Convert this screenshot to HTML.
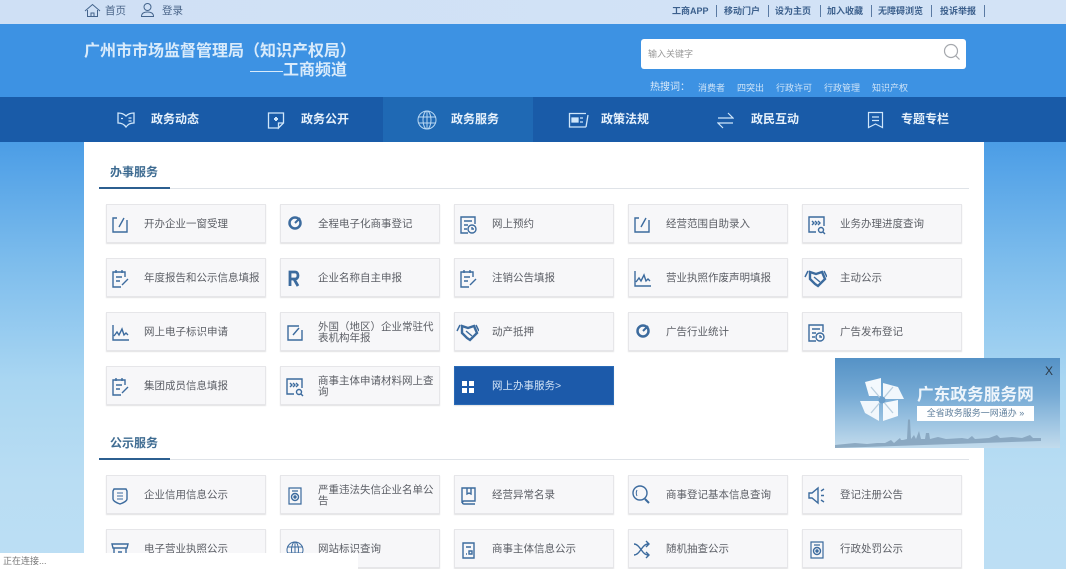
<!DOCTYPE html>
<html lang="zh-CN"><head><meta charset="utf-8"><title>工商频道</title>
<style>
*{box-sizing:border-box}
html,body{margin:0;padding:0}
body{width:1066px;height:569px;overflow:hidden;position:relative;font-family:"Liberation Sans","Noto Sans CJK SC",sans-serif;background:linear-gradient(180deg,#4b9de6 142px,#7cbcec 260px,#a9d6f2 380px,#b9ddf3 480px,#bcdef4 569px)}
#w{position:absolute;left:0;top:0;width:1066px;height:569px;filter:blur(.35px)}
.a{position:absolute;white-space:nowrap}
#top{left:0;top:0;width:1066px;height:24px;background:linear-gradient(90deg,#cfe0f5,#d3e3f6)}
.tl{top:5px;font-size:9px;line-height:13px;color:#3b5f8c;font-weight:bold}
.tn{top:4px;font-size:10.500px;line-height:14px;color:#4a6488}
.sp{top:5px;width:1px;height:12px;background:#5a7aa3}
#hd{left:0;top:24px;width:1066px;height:73px;background:#3d92e3}
#nav{left:0;top:97px;width:1066px;height:45px;background:#195ba8}
#act{left:383px;top:97px;width:150px;height:45px;background:#1f69b4}
.n{top:111px;font-size:12px;line-height:17px;font-weight:bold;color:#e6f1fb}
.hw{top:82px;font-size:9px;line-height:13px;color:#cfe4f8}
#panel{left:84px;top:142px;width:900px;height:427px;background:#fff}
.h{left:110px;font-size:12px;line-height:16px;color:#3f6c92;font-weight:bold}
.g{left:99px;width:870px;height:1px;background:#dfe3e8}
.u{left:99px;width:71px;height:2px;background:#2c5f90}
.c{position:absolute;width:160px;height:39px;background:#f7f7f9;border:1px solid #e6e6e9;box-shadow:0 1px 1px #e2e2e4;font-size:10.5px;color:#5c5f66}
.c svg{position:absolute;left:0;top:7px;width:24px;height:24px;fill:none;stroke:#3c6b9e;stroke-width:1.4}
.c span{position:absolute;left:37px;top:1px;width:121px;height:37px;display:flex;align-items:center;line-height:11px}
#blue{background:#1c5aaa;border-color:#2a6ab6;color:#d3e4f7}
#ad{left:835px;top:358px;width:225px;height:90px;background:linear-gradient(180deg,#5592c6 0,#74a9d4 40%,#a5c9e4 78%,#c2dbec 100%);overflow:hidden}
#st{left:0;top:553px;width:358px;height:16px;background:#fff;font-size:9px;line-height:16px;color:#777;padding-left:3px}
</style></head><body><div id="w">

<div class="a" id="top"></div>
<svg class="a" style="left:84px;top:3px" width="17" height="15" viewBox="0 0 17 15" fill="none" stroke="#44648c" stroke-width="1"><path d="M1 8 8.5 1.5 16 8M3.5 7v6.5h10V7M7 13.5V10h3v3.5"/></svg>
<div class="a tn" style="left:105px">首页</div>
<svg class="a" style="left:140px;top:2px" width="15" height="16" viewBox="0 0 15 16" fill="none" stroke="#44648c" stroke-width="1"><circle cx="7.5" cy="5" r="3.5"/><path d="M1.5 14.5c0-3 2-4.5 6-4.5s6 1.500 6 4.500z"/></svg>
<div class="a tn" style="left:162px">登录</div>
<div class="a tl" style="left:672px">工商APP</div><div class="a sp" style="left:716px"></div>
<div class="a tl" style="left:724px">移动门户</div><div class="a sp" style="left:768px"></div>
<div class="a tl" style="left:775px">设为主页</div><div class="a sp" style="left:820px"></div>
<div class="a tl" style="left:827px">加入收藏</div><div class="a sp" style="left:871px"></div>
<div class="a tl" style="left:878px">无障碍浏览</div><div class="a sp" style="left:931px"></div>
<div class="a tl" style="left:940px">投诉举报</div><div class="a sp" style="left:984px"></div>

<div class="a" id="hd"></div>
<div class="a" style="left:84px;top:42px;font-size:16px;line-height:20px;font-weight:bold;color:#d9ebfb">广州市市场监督管理局（知识产权局）</div>
<div class="a" style="left:250px;top:71px;width:33px;height:1px;background:#d9ebfb"></div>
<div class="a" style="left:283px;top:61px;font-size:16px;line-height:20px;font-weight:bold;color:#d9ebfb">工商频道</div>
<div class="a" style="left:641px;top:39px;width:325px;height:30px;background:#fff;border-radius:3px"></div>
<div class="a" style="left:648px;top:48px;font-size:9px;line-height:12px;color:#999">输入关键字</div>
<svg class="a" style="left:943px;top:43px" width="18" height="18" viewBox="0 0 18 18" fill="none" stroke="#a5a8ad" stroke-width="1.2"><circle cx="8" cy="8" r="6.500"/><path d="M12.800 12.800 16.500 16.500"/></svg>
<div class="a" style="left:650px;top:81px;font-size:10px;line-height:14px;color:#dcebfa">热搜词：</div>
<div class="a hw" style="left:698px">消费者</div>
<div class="a hw" style="left:737px">四突出</div>
<div class="a hw" style="left:776px">行政许可</div>
<div class="a hw" style="left:824px">行政管理</div>
<div class="a hw" style="left:872px">知识产权</div>

<div class="a" id="nav"></div><div class="a" id="act"></div>
<svg class="a" style="left:116px;top:111px" width="20" height="18" viewBox="0 0 20 18" fill="none" stroke="#cfe6fa" stroke-width="1.300"><path d="M2 2c3 0 6 1 8 3 2-2 5-3 8-3v10c-3 0-6 1-8 4-2-3-5-4-8-4z"/><path d="M12.500 7h3M12.500 10h3M5 7.500h2"/></svg>
<svg class="a" style="left:267px;top:111px" width="19" height="19" viewBox="0 0 19 19" fill="none" stroke="#cfe6fa" stroke-width="1.300"><path d="M11 17H1.500V2h15v10l-5 5v-5h5"/><path d="M7 8h4M9 6v4" stroke-width="2"/></svg>
<svg class="a" style="left:417px;top:110px" width="20" height="20" viewBox="0 0 20 20" fill="none" stroke="#b9d8f3" stroke-width="1"><circle cx="10" cy="10" r="9"/><ellipse cx="10" cy="10" rx="4" ry="9"/><path d="M1 7h18M1 13h18M10 1v18"/></svg>
<svg class="a" style="left:568px;top:112px" width="21" height="16" viewBox="0 0 21 16" fill="none" stroke="#cfe6fa" stroke-width="1.300"><path d="M18 15H1.500V1.500H18M20 3l-2 12"/><path d="M4 6h6v4H4z" fill="#cfe6fa"/><path d="M12 6h3M12 10h3"/></svg>
<svg class="a" style="left:717px;top:111px" width="17" height="19" viewBox="0 0 17 19" fill="none" stroke="#cfe6fa" stroke-width="1.200"><path d="M1 7h15L11 2M16 12H1l5 5"/></svg>
<svg class="a" style="left:867px;top:111px" width="17" height="19" viewBox="0 0 17 19" fill="none" stroke="#cfe6fa" stroke-width="1.200"><path d="M1.500 1.500h14v15l-7-3.500-7 3.500z"/><path d="M5 6h7M5 9.500h7"/></svg>
<div class="a n" style="left:151px">政务动态</div>
<div class="a n" style="left:301px">政务公开</div>
<div class="a n" style="left:451px">政务服务</div>
<div class="a n" style="left:601px">政策法规</div>
<div class="a n" style="left:751px">政民互动</div>
<div class="a n" style="left:901px">专题专栏</div>

<div class="a" id="panel"></div>
<div class="a h" style="top:164px">办事服务</div>
<div class="a g" style="top:188px"></div><div class="a u" style="top:187px"></div>
<div class="a h" style="top:435px">公示服务</div>
<div class="a g" style="top:459px"></div><div class="a u" style="top:458px"></div>

<!-- row 1 -->
<div class="c" style="left:106px;top:204px"><svg viewBox="0 0 24 24"><path d="M10 6H6v14h14V8M12 15l5-9"/></svg><span>开办企业一窗受理</span></div>
<div class="c" style="left:280px;top:204px"><svg viewBox="0 0 24 24"><circle cx="14" cy="11" r="5.500" stroke-width="2.500"/><path d="M14 11l5-5" stroke-width="2"/></svg><span>全程电子化商事登记</span></div>
<div class="c" style="left:454px;top:204px"><svg viewBox="0 0 24 24"><path d="M20 12V5H6v16h7M9 9h8M9 13h4M9 17h3"/><circle cx="17" cy="17" r="4"/><path d="M17 15v2h2"/></svg><span>网上预约</span></div>
<div class="c" style="left:628px;top:204px"><svg viewBox="0 0 24 24"><path d="M10 6H6v14h14V8M12 15l5-9"/></svg><span>经营范围自助录入</span></div>
<div class="c" style="left:802px;top:204px"><svg viewBox="0 0 24 24"><path d="M13 20H6V5h15v9M9 9l2 2-2 2M12 9l2 2-2 2M15 9l2 2-2 2"/><circle cx="18" cy="18" r="2.500"/><path d="M20 20l2 2"/></svg><span>业务办理进度查询</span></div>
<!-- row 2 -->
<div class="c" style="left:106px;top:258px"><svg viewBox="0 0 24 24"><path d="M18 11V6H6v15h8M9 4v3M15 4v3M9 11h6M9 15h4M15 19l6-6"/></svg><span>年度报告和公示信息填报</span></div>
<div class="c" style="left:280px;top:258px"><svg viewBox="0 0 24 24"><path stroke-width="2.800" d="M9 20V6h5c4 0 4 7 0 7H9M13 13l4 7"/></svg><span>企业名称自主申报</span></div>
<div class="c" style="left:454px;top:258px"><svg viewBox="0 0 24 24"><path d="M18 11V6H6v15h8M9 4v3M15 4v3M9 11h6M9 15h4M15 19l6-6"/></svg><span>注销公告填报</span></div>
<div class="c" style="left:628px;top:258px"><svg viewBox="0 0 24 24"><path d="M6 5v15h16M7 16l3-4 2 3 3-6 2 6 2-2 2 2"/></svg><span>营业执照作废声明填报</span></div>
<div class="c" style="left:802px;top:258px"><svg viewBox="0 0 24 24"><path d="M2 11l3-6M24 11l-3-6" stroke-width="1.500"/><path d="M7 6l6 2 6-2 3 7-7 7-3-2-5-5z" stroke-width="2.400"/><path d="M11 11l6 5"/></svg><span>主动公示</span></div>
<!-- row 3 -->
<div class="c" style="left:106px;top:312px"><svg viewBox="0 0 24 24"><path d="M6 5v15h16M7 16l3-4 2 3 3-6 2 6 2-2 2 2"/></svg><span>网上电子标识申请</span></div>
<div class="c" style="left:280px;top:312px"><svg viewBox="0 0 24 24"><path d="M18 6H7v14h14V10M12 15l6-7"/></svg><span>外国（地区）企业常驻代表机构年报</span></div>
<div class="c" style="left:454px;top:312px"><svg viewBox="0 0 24 24"><path d="M2 11l3-6M24 11l-3-6" stroke-width="1.500"/><path d="M7 6l6 2 6-2 3 7-7 7-3-2-5-5z" stroke-width="2.400"/><path d="M11 11l6 5"/></svg><span>动产抵押</span></div>
<div class="c" style="left:628px;top:312px"><svg viewBox="0 0 24 24"><circle cx="14" cy="11" r="5.500" stroke-width="2.500"/><path d="M14 11l5-5" stroke-width="2"/></svg><span>广告行业统计</span></div>
<div class="c" style="left:802px;top:312px"><svg viewBox="0 0 24 24"><path d="M20 12V5H6v16h7M9 9h8M9 13h4M9 17h3"/><circle cx="17" cy="17" r="4"/><path d="M17 15v2h2"/></svg><span>广告发布登记</span></div>
<!-- row 4 -->
<div class="c" style="left:106px;top:366px"><svg viewBox="0 0 24 24"><path d="M18 11V6H6v15h8M9 4v3M15 4v3M9 11h6M9 15h4M15 19l6-6"/></svg><span>集团成员信息填报</span></div>
<div class="c" style="left:280px;top:366px"><svg viewBox="0 0 24 24"><path d="M13 20H6V5h15v9M9 9l2 2-2 2M12 9l2 2-2 2M15 9l2 2-2 2"/><circle cx="18" cy="18" r="2.500"/><path d="M20 20l2 2"/></svg><span>商事主体申请材料网上查询</span></div>
<div class="c" id="blue" style="left:454px;top:366px"><svg viewBox="0 0 24 24" style="fill:#fff;stroke:none"><path d="M7 7h5v5H7zM14 7h5v5h-5zM7 14h5v5H7zM14 14h5v5h-5z"/></svg><span>网上办事服务&gt;</span></div>
<!-- row 5 -->
<div class="c" style="left:106px;top:475px"><svg viewBox="0 0 24 24"><path d="M7 6h12l1 2v8c0 2-4 4-7 5-3-1-7-3-7-5V8z"/><path d="M10 10h6M10 13h6M10 16h6" stroke-width="1"/></svg><span>企业信用信息公示</span></div>
<div class="c" style="left:280px;top:475px"><svg viewBox="0 0 24 24"><path d="M8 5h12v16H8zM11 8h6" stroke-width="1.200"/><circle cx="14" cy="14" r="3.500"/><circle cx="14" cy="14" r="1" fill="#3c6b9e"/></svg><span>严重违法失信企业名单公告</span></div>
<div class="c" style="left:454px;top:475px"><svg viewBox="0 0 24 24"><path d="M7 20V5h13v13H9c-2 0-2 3 0 3h11M12 5v6l2-1 2 1V5"/></svg><span>经营异常名录</span></div>
<div class="c" style="left:628px;top:475px"><svg viewBox="0 0 24 24"><circle cx="11" cy="10" r="7"/><path d="M16 16l4 4" stroke-width="2"/><path d="M8 7c-1 2-1 4 0 6" stroke-width="1"/></svg><span>商事登记基本信息查询</span></div>
<div class="c" style="left:802px;top:475px"><svg viewBox="0 0 24 24"><path d="M6 10v5h3l6 5V5l-6 5zM18 8l3-2M18 12.500h3M18 17l3 2"/></svg><span>登记注册公告</span></div>
<!-- row 6 -->
<div class="c" style="left:106px;top:529px"><svg viewBox="0 0 24 24"><path d="M5 7h16l-1 4H6zM7 11v9h12v-9M11 15h4"/></svg><span>电子营业执照公示</span></div>
<div class="c" style="left:280px;top:529px"><svg viewBox="0 0 24 24"><g stroke-width="1"><circle cx="14" cy="13" r="8"/><ellipse cx="14" cy="13" rx="3.500" ry="8"/><path d="M6 10h16M6 16h16M14 5v16"/></g></svg><span>网站标识查询</span></div>
<div class="c" style="left:454px;top:529px"><svg viewBox="0 0 24 24"><path d="M8 6h11v15H8zM11 10h5M11 17h1M14 14h3v3h-3z"/></svg><span>商事主体信息公示</span></div>
<div class="c" style="left:628px;top:529px"><svg viewBox="0 0 24 24"><path d="M5 7c6 0 8 11 14 11M5 18c6 0 8-11 14-11M17 4l3 3-3 3M17 15l3 3-3 3"/></svg><span>随机抽查公示</span></div>
<div class="c" style="left:802px;top:529px"><svg viewBox="0 0 24 24"><path d="M8 5h12v16H8zM11 8h6" stroke-width="1.200"/><circle cx="14" cy="14" r="3.500"/><circle cx="14" cy="14" r="1" fill="#3c6b9e"/></svg><span>行政处罚公示</span></div>

<!-- ad -->
<div class="a" id="ad">
<svg class="a" style="left:0;top:0" width="225" height="90" viewBox="0 0 225 90">
<path d="M0 90V87l20-2 12 1 10-1 8 0 6-3 3 3 6-5 1 2 2 0 4-1 1-19 1-1 1 1 1 19 3-4 2 4 3-8 2 8 4 0 1-6 3 0 1 6 8-2 8 2 16-1 6 1 4-3 3 3 14-1 8-3 3 3 12-1 10 1 8-3 3 3 8 0v3z" fill="#7f9db8" opacity=".8"/>
<path d="M30 24 46 20 46 38 34 38z" fill="#f4f9fd"/>
<path d="M48 25 63 29 69 41 48 41z" fill="#f1f7fc"/>
<path d="M48 45 63 42 63 58 48 63z" fill="#f4f9fd"/>
<path d="M25 43 44 43 44 63 30 55z" fill="#f1f7fc"/>
<path d="M36 29 58 55M58 29 36 55" stroke="#b9cede" stroke-width="1.300"/>
<circle cx="47" cy="42" r="3.500" fill="#6b9fcb"/>
</svg>
<div class="a" style="left:82px;top:26px;font-size:16.700px;line-height:22px;color:#eef5fb;font-weight:bold">广东政务服务网</div>
<div class="a" style="left:82px;top:48px;width:117px;height:15px;background:#fff"></div>
<div class="a" style="left:82px;top:48px;width:117px;height:15px;font-size:9px;line-height:15px;color:#5f7f9c;text-align:center">全省政务服务一网通办 »</div>
<div class="a" style="left:210px;top:6px;font-size:12px;line-height:15px;color:#2c3a48">X</div>
</div>

<div class="a" id="st">正在连接...</div>
</div></body></html>
